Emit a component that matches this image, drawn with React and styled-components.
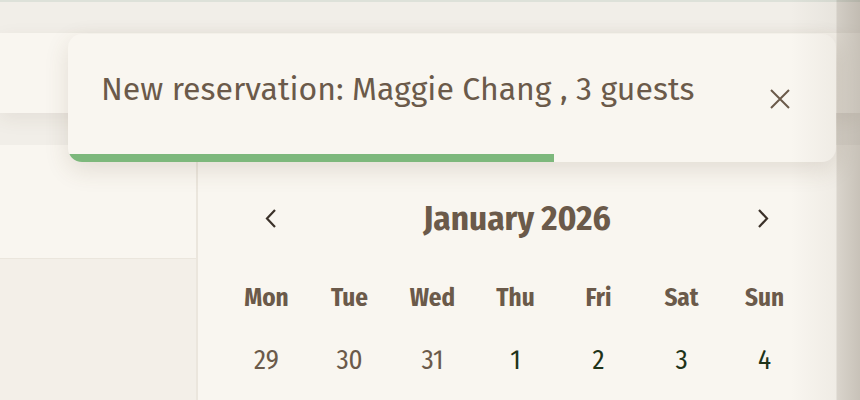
import React from 'react';
import styled, { createGlobalStyle } from 'styled-components';

const GlobalStyle = createGlobalStyle`
  html, body {
    margin: 0;
    padding: 0;
    background: #f1eee8;
    font-family: "Fira Sans", "Open Sans", "Noto Sans", sans-serif;
    color: #6b5a4a;
  }
  #root {
    min-height: 400px;
    overflow: hidden;
  }
`;

const condensed = `"Fira Sans Condensed", "Liberation Sans Narrow", "DejaVu Sans Condensed", sans-serif`;

const Shell = styled.div`
  position: relative;
  height: 400px;
  overflow: hidden;
`;

const TopRule = styled.div`
  height: 2px;
  background: #dde1d9;
`;

const Header = styled.header`
  margin-top: 31px;
  height: 80px;
  background: #f9f6f0;
  box-shadow: 0 6px 18px rgba(90, 70, 40, 0.08);
`;

const Main = styled.main`
  margin-top: 32px;
  display: grid;
  grid-template-columns: 198px 1fr;
  background: #f9f6f0;
  height: 255px;
`;

const Sidebar = styled.aside`
  display: flex;
  flex-direction: column;
  border-right: 2px solid #ebe6dd;
`;

const SideTop = styled.div`
  height: 113px;
  background: #f9f6f0;
  border-bottom: 1px solid #ebe6dd;
`;

const SideRest = styled.div`
  flex: 1;
  background: #f3efe8;
`;

const Calendar = styled.section`
  padding: 48px 0 0 27px;
`;

const CalHeader = styled.div`
  width: 581px;
  height: 50px;
  display: flex;
  align-items: center;
  justify-content: space-between;
  padding: 0 28px 0 31px;
  box-sizing: border-box;
`;

const NavButton = styled.button`
  width: 30px;
  height: 30px;
  border: none;
  background: none;
  padding: 0;
  display: flex;
  align-items: center;
  justify-content: center;
  color: #3b3129;
  cursor: pointer;
`;

const MonthTitle = styled.h2`
  margin: 0;
  font-family: ${condensed};
  font-weight: 700;
  font-size: 35px;
  color: #6b5a4a;
`;

const Row = styled.div`
  display: grid;
  grid-template-columns: repeat(7, 83px);
  height: 40px;
  margin-top: ${p => p.$gap}px;
  align-items: center;
`;

const DayName = styled.div`
  text-align: center;
  font-family: ${condensed};
  font-weight: 700;
  font-size: 25px;
  color: #6b5a4a;
`;

const DateCell = styled.div`
  text-align: center;
  font-family: ${condensed};
  font-size: 27px;
  color: ${p => (p.$muted ? '#6b5a4a' : '#1f3319')};
`;

const EdgeShade = styled.div`
  position: absolute;
  top: 0;
  right: 0;
  bottom: 0;
  width: 70px;
  pointer-events: none;
  background: linear-gradient(
    to right,
    rgba(60, 45, 25, 0) 0px,
    rgba(60, 45, 25, 0.05) 46px,
    rgba(60, 45, 25, 0.17) 47px,
    rgba(60, 45, 25, 0.26) 70px
  );
`;

const Toast = styled.div`
  position: absolute;
  top: 34px;
  left: 68px;
  width: 768px;
  height: 128px;
  box-sizing: border-box;
  border-radius: 14px;
  background: #f9f6f0;
  box-shadow: 0 8px 24px rgba(90, 70, 40, 0.14);
  overflow: hidden;
  display: flex;
  align-items: flex-start;
  justify-content: space-between;
  padding: 36px 44px 0 33px;
`;

const ToastText = styled.p`
  margin: 0;
  font-size: 32px;
  line-height: 38px;
  color: #6b5a4a;
`;

const CloseButton = styled.button`
  margin-top: 17px;
  width: 24px;
  height: 24px;
  border: none;
  background: none;
  padding: 0;
  color: #6b5a4a;
  display: flex;
  align-items: center;
  justify-content: center;
`;

const Progress = styled.div`
  position: absolute;
  left: 0;
  bottom: 0;
  height: 8px;
  background: #7db87c;
`;

const Chevron = ({ dir }) => (
  <svg width="14" height="21" viewBox="0 0 14 21" fill="none">
    <path
      d={dir === 'left' ? 'M11 2 L3 10.5 L11 19' : 'M3 2 L11 10.5 L3 19'}
      stroke="currentColor"
      strokeWidth="2.2"
    />
  </svg>
);

const CloseIcon = () => (
  <svg width="20" height="20" viewBox="0 0 20 20" fill="none">
    <path d="M1 1 L19 19 M19 1 L1 19" stroke="currentColor" strokeWidth="2" />
  </svg>
);

const days = ['Mon', 'Tue', 'Wed', 'Thu', 'Fri', 'Sat', 'Sun'];
const week = [
  { d: 29, muted: true },
  { d: 30, muted: true },
  { d: 31, muted: true },
  { d: 1 },
  { d: 2 },
  { d: 3 },
  { d: 4 },
];

export default function App() {
  return (
    <Shell>
      <GlobalStyle />
      <TopRule />
      <Header />
      <Main>
        <Sidebar>
          <SideTop />
          <SideRest />
        </Sidebar>
        <Calendar>
          <CalHeader>
            <NavButton aria-label="Previous month">
              <Chevron dir="left" />
            </NavButton>
            <MonthTitle>January 2026</MonthTitle>
            <NavButton aria-label="Next month">
              <Chevron dir="right" />
            </NavButton>
          </CalHeader>
          <Row $gap={35}>
            {days.map(d => (
              <DayName key={d}>{d}</DayName>
            ))}
          </Row>
          <Row $gap={22}>
            {week.map(w => (
              <DateCell key={w.d} $muted={w.muted}>
                {w.d}
              </DateCell>
            ))}
          </Row>
        </Calendar>
      </Main>
      <Toast role="status">
        <ToastText>New reservation: Maggie Chang , 3 guests</ToastText>
        <CloseButton aria-label="Dismiss">
          <CloseIcon />
        </CloseButton>
        <Progress style={{ width: `${(486 / 768) * 100}%` }} />
      </Toast>
      <EdgeShade />
    </Shell>
  );
}
